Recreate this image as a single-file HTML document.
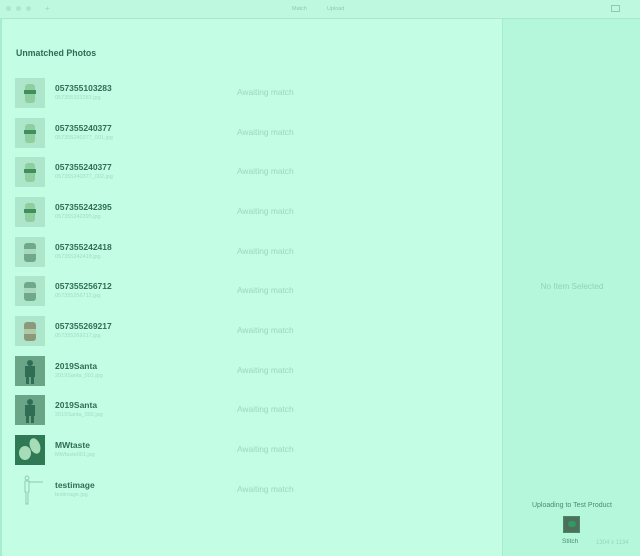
<!DOCTYPE html>
<html><head><meta charset="utf-8"><style>
*{margin:0;padding:0;box-sizing:border-box}
body{width:640px;height:556px;overflow:hidden;background:#c2fde4;font-family:"Liberation Sans",sans-serif;position:relative}
.tb{position:absolute;left:0;top:0;width:640px;height:19px;background:#bdf8df;border-bottom:1px solid #a9e8cc}
.side{position:absolute;left:502px;top:19px;width:138px;height:537px;background:#b4f7da;border-left:1px solid #a8ebcd}
.left{position:absolute;left:0;top:19px;width:2px;height:537px;background:#a8ecce}
.h{position:absolute;left:16px;top:48px;font-size:8.8px;font-weight:bold;color:#2f6d55}
.row{position:absolute;left:0;width:500px;height:30px}
.th{position:absolute;left:15px;top:0;width:30px;height:30px;background:#aee6cb}
.nm{position:absolute;left:55px;top:5px;font-size:8.5px;font-weight:bold;color:#2f6d55}
.fn{position:absolute;left:55px;top:17px;font-size:5.5px;color:#a3dcc3}
.aw{position:absolute;left:237px;top:9px;font-size:8.4px;color:#9fd6bd}
.t{font-size:5.5px;color:#9fd6bd;position:absolute}
</style></head><body>
<div class="tb">
 <div style="position:absolute;left:6px;top:6px;width:5px;height:5px;border-radius:3px;background:#aee6cb"></div>
 <div style="position:absolute;left:16px;top:6px;width:5px;height:5px;border-radius:3px;background:#aee6cb"></div>
 <div style="position:absolute;left:26px;top:6px;width:5px;height:5px;border-radius:3px;background:#aee6cb"></div>
 <div class="t" style="left:45px;top:4px;font-size:8px">+</div>
 <div class="t" style="left:292px;top:6px;color:#8fcab0">Match</div>
 <div class="t" style="left:327px;top:6px;color:#8fcab0">Upload</div>
 <div style="position:absolute;left:611px;top:5px;width:9px;height:7px;border:1px solid #8fcab0"></div>
</div>
<div class="left"></div>
<div class="side">
 <div style="position:absolute;left:0;width:138px;top:263px;text-align:center;font-size:8.2px;color:#95d0b6">No Item Selected</div>
 <div style="position:absolute;left:0;width:138px;top:483px;text-align:center;font-size:7px;color:#4c8c70">Uploading to Test Product</div>
 <div style="position:absolute;left:60px;top:497px;width:17px;height:17px;background:#4f6f5a;border:1px solid #3f8c66"><div style="margin:4px;width:8px;height:6px;border-radius:3px;background:#2f9a65"></div></div>
 <div style="position:absolute;left:59px;top:519px;font-size:6.5px;color:#4c8c70">Stitch</div>
 <div style="position:absolute;left:93px;top:521px;font-size:6px;color:#9ad5bb">1304 x 1134</div>
</div>
<div class="h">Unmatched Photos</div>

<div class="row" style="top:78px"><div class="th"><svg width="30" height="30"><rect x="10" y="6" width="10" height="19" rx="3" fill="#8fcf9f"/><rect x="9" y="12" width="12" height="4" fill="#3f8f5f"/></svg></div><div class="nm">057355103283</div><div class="fn">057355103283.jpg</div><div class="aw">Awaiting match</div></div>
<div class="row" style="top:118px"><div class="th"><svg width="30" height="30"><rect x="10" y="6" width="10" height="19" rx="3" fill="#8fcf9f"/><rect x="9" y="12" width="12" height="4" fill="#3f8f5f"/></svg></div><div class="nm">057355240377</div><div class="fn">057355240377_001.jpg</div><div class="aw">Awaiting match</div></div>
<div class="row" style="top:157px"><div class="th"><svg width="30" height="30"><rect x="10" y="6" width="10" height="19" rx="3" fill="#8fcf9f"/><rect x="9" y="12" width="12" height="4" fill="#3f8f5f"/></svg></div><div class="nm">057355240377</div><div class="fn">057355240377_002.jpg</div><div class="aw">Awaiting match</div></div>
<div class="row" style="top:197px"><div class="th"><svg width="30" height="30"><rect x="10" y="6" width="10" height="19" rx="3" fill="#8fcf9f"/><rect x="9" y="12" width="12" height="4" fill="#3f8f5f"/></svg></div><div class="nm">057355242395</div><div class="fn">057355242395.jpg</div><div class="aw">Awaiting match</div></div>
<div class="row" style="top:237px"><div class="th"><svg width="30" height="30"><rect x="9" y="6" width="12" height="19" rx="3" fill="#6fa88a"/><rect x="9" y="12" width="12" height="5" fill="#a9d9bd"/></svg></div><div class="nm">057355242418</div><div class="fn">057355242418.jpg</div><div class="aw">Awaiting match</div></div>
<div class="row" style="top:276px"><div class="th"><svg width="30" height="30"><rect x="9" y="6" width="12" height="19" rx="3" fill="#6fa88a"/><rect x="9" y="12" width="12" height="5" fill="#a9d9bd"/></svg></div><div class="nm">057355256712</div><div class="fn">057355256712.jpg</div><div class="aw">Awaiting match</div></div>
<div class="row" style="top:316px"><div class="th"><svg width="30" height="30"><rect x="9" y="6" width="12" height="19" rx="3" fill="#8a9a7a"/><rect x="9" y="13" width="12" height="5" fill="#b0c9a8"/></svg></div><div class="nm">057355269217</div><div class="fn">057355269217.jpg</div><div class="aw">Awaiting match</div></div>
<div class="row" style="top:356px"><div class="th" style="background:#6aa587"><svg width="30" height="30"><circle cx="15" cy="7" r="3" fill="#2f6d55"/><rect x="10" y="10" width="10" height="11" fill="#2f6d55"/><rect x="11" y="21" width="3" height="7" fill="#2f6d55"/><rect x="16" y="21" width="3" height="7" fill="#2f6d55"/></svg></div><div class="nm">2019Santa</div><div class="fn">2019Santa_001.jpg</div><div class="aw">Awaiting match</div></div>
<div class="row" style="top:395px"><div class="th" style="background:#6aa587"><svg width="30" height="30"><circle cx="15" cy="7" r="3" fill="#2f6d55"/><rect x="10" y="10" width="10" height="11" fill="#2f6d55"/><rect x="11" y="21" width="3" height="7" fill="#2f6d55"/><rect x="16" y="21" width="3" height="7" fill="#2f6d55"/></svg></div><div class="nm">2019Santa</div><div class="fn">2019Santa_002.jpg</div><div class="aw">Awaiting match</div></div>
<div class="row" style="top:435px"><div class="th" style="background:#2f7a55"><svg width="30" height="30"><ellipse cx="10" cy="18" rx="6" ry="7" fill="#a6dcb8"/><ellipse cx="20" cy="11" rx="5" ry="8" transform="rotate(-20 20 11)" fill="#a6dcb8"/></svg></div><div class="nm">MWtaste</div><div class="fn">MWtaste001.jpg</div><div class="aw">Awaiting match</div></div>
<div class="row" style="top:475px"><div class="th" style="background:transparent"><svg width="30" height="30"><circle cx="12" cy="3" r="2" fill="none" stroke="#7fb99c" stroke-width=".7"/><path d="M10 6h4v11h-1v12h-2V17h-1z M14 7h14" fill="none" stroke="#7fb99c" stroke-width=".7"/></svg></div><div class="nm">testimage</div><div class="fn">testimage.jpg</div><div class="aw">Awaiting match</div></div>
</body></html>
